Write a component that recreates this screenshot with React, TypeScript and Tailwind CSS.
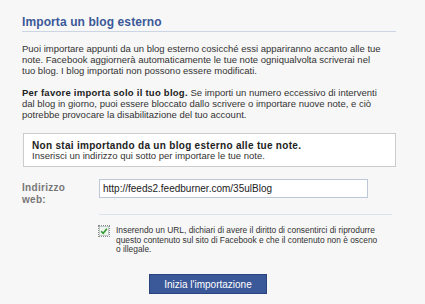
export default function App() {
  return (
    <div className="w-[425px] h-[304px] bg-[#f7f7f7] text-[#333] font-['Liberation_Sans',Arial,sans-serif] overflow-hidden">
      <div className="pl-[22px] pr-[29px] pt-[15px]">
        <h2 className="text-[12px] font-bold text-[#3b5998] leading-[15px] pb-[1px] border-b border-[#ccd5e4] tracking-[0.1px]">
          Importa un blog esterno
        </h2>
        <p className="mt-[11px] text-[9.5px] leading-[11px] whitespace-nowrap">
          Puoi importare appunti da un blog esterno cosicché essi appariranno accanto alle tue
          <br />
          note. Facebook aggiornerà automaticamente le tue note ogniqualvolta scriverai nel
          <br />
          tuo blog. I blog importati non possono essere modificati.
        </p>
        <p className="mt-[11px] text-[9.5px] leading-[11px] whitespace-nowrap">
          <b className="text-[#222] tracking-[0.25px]">Per favore importa solo il tuo blog.</b> Se importi un numero eccessivo di interventi
          <br />
          dal blog in giorno, puoi essere bloccato dallo scrivere o importare nuove note, e ciò
          <br />
          potrebbe provocare la disabilitazione del tuo account.
        </p>
        <div className="mt-[13px] ml-[1px] h-[34px] bg-white border border-[#cccccc] pl-[8px] pt-[7px] text-[9.5px] leading-[10px] whitespace-nowrap">
          <div className="font-bold text-[10px] tracking-[0.3px] text-[#222]">Non stai importando da un blog esterno alle tue note.</div>
          <div>Inserisci un indirizzo qui sotto per importare le tue note.</div>
        </div>
        <div className="mt-[12px] flex h-[19px]">
          <label className="w-[77px] pt-[3px] text-[10px] leading-[12px] font-bold text-[#777] tracking-[0.3px]">
            Indirizzo
            <br />
            web:
          </label>
          <input
            readOnly
            value="http://feeds2.feedburner.com/35ulBlog"
            className="w-[269px] h-[19px] bg-white border border-[#bdc7d8] px-[3px] text-[10px] text-[#222] outline-none font-['Liberation_Sans',Arial,sans-serif]"
          />
        </div>
        <div className="ml-[77px] mt-[16px] w-[293px] border-t border-[#dde3ec]" />
        <div className="ml-[76px] mt-[10px] flex items-start gap-[6px]">
          <span className="w-[12px] h-[12px] shrink-0 border border-dotted border-[#888] bg-white flex items-center justify-center">
            <svg width="10" height="10" viewBox="0 0 10 10">
              <rect x="0.5" y="0.5" width="9" height="9" fill="#eef6ee" stroke="#9aa" strokeWidth="0.6" />
              <path d="M2.2 5.2 L4.2 7.2 L7.8 2.8" fill="none" stroke="#2f9b2f" strokeWidth="1.6" />
            </svg>
          </span>
          <p className="mt-[1px] text-[8.4px] leading-[9.5px] whitespace-nowrap">
            Inserendo un URL, dichiari di avere il diritto di consentirci di riprodurre
            <br />
            questo contenuto sul sito di Facebook e che il contenuto non è osceno
            <br />o illegale.
          </p>
        </div>
        <div className="mt-[16px] pl-[127px]">
          <button className="w-[118px] h-[20px] bg-[#3b5998] border border-[#29447e] text-white text-[10px] font-['Liberation_Sans',Arial,sans-serif]">
            Inizia l'importazione
          </button>
        </div>
      </div>
    </div>
  );
}
